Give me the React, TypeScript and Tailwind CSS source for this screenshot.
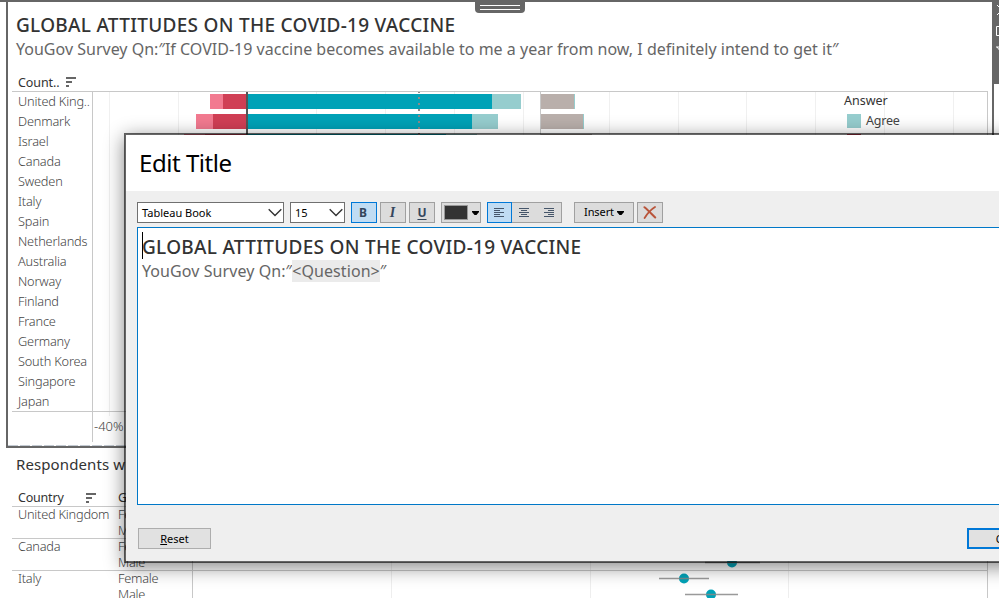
import React from "react";

const countries = [
  "United King..", "Denmark", "Israel", "Canada", "Sweden", "Italy", "Spain", "Netherlands",
  "Australia", "Norway", "Finland", "France", "Germany", "South Korea", "Singapore", "Japan",
];

const bars = [
  { y: 2, segs: [[118, 13, "#f27a90"], [131, 23, "#d03f55"], [155, 245, "#00a2b7"], [400, 29, "#96cdce"], [449, 33, "#b9afab"], [482, 1, "#96cdce"]] },
  { y: 22, segs: [[104, 17, "#f27a90"], [121, 33, "#d03f55"], [155, 225, "#00a2b7"], [380, 26, "#96cdce"], [449, 42, "#b9afab"], [491, 1, "#96cdce"]] },
  { y: 42, segs: [[92, 21, "#f27a90"], [113, 41, "#d03f55"], [155, 199, "#00a2b7"], [354, 31, "#96cdce"], [449, 51, "#b9afab"]] },
] as { y: number; segs: [number, number, string][] }[];

const grid = [17, 86, 224, 293, 362, 431, 517, 586, 654, 723, 792, 861];

const SortIcon = () => (
  <svg width="11" height="11" viewBox="0 0 11 11" className="shrink-0" fill="#666" shapeRendering="crispEdges">
    <path d="M0 0h10v2H0zM0 4h6v2H0zM0 8h3v2H0z" />
  </svg>
);

const Chevron = () => (
  <svg width="14" height="9" viewBox="0 0 14 9" fill="none" stroke="#333" strokeWidth="1.4" className="shrink-0">
    <path d="M.7 1.2 7 7.5l6.3-6.3" />
  </svg>
);

const Caret = () => (
  <svg width="7" height="4" viewBox="0 0 7 4" className="shrink-0"><path d="M0 0h7v1L4.5 4h-2L0 1z" fill="#000" /></svg>
);

const AlignIcon = ({ kind }: { kind: "left" | "center" | "right" }) => (
  <svg width="10" height="9" viewBox="0 0 10 9" className="shrink-0" fill="#46566a" shapeRendering="crispEdges">
    {[10, 6, 10, 6, 10].map((w, i) => (
      <rect key={i} x={kind === "left" ? 0 : kind === "center" ? (10 - w) / 2 : 10 - w} y={i * 2} width={w} height="1" />
    ))}
  </svg>
);

const btn = "flex h-[21px] shrink-0 items-center justify-center border border-[#a0a0a0] bg-[#dcdcdc]";
const btnOn = "flex h-[21px] shrink-0 items-center justify-center border border-[#0078d7] bg-[#c0dcf3]";

function DivergingChart() {
  return (
    <svg width="896" height="350" className="shrink-0" shapeRendering="crispEdges">
      {grid.map((x) => <rect key={x} x={x} y="0" width="1" height="324" fill="#f0f0f0" />)}
      <rect x="448" y="0" width="1" height="350" fill="#c8c8c8" />
      {bars.map((b) => b.segs.map(([x, w, c]) => <rect key={`${b.y}-${x}`} x={x} y={b.y} width={w} height="15" fill={c} />))}
      <rect x="154" y="0" width="2" height="320" fill="#555" />
      <path d="M327 -1V320" stroke="#8f8888" strokeWidth="2" strokeDasharray="2 4" />
      <rect x="895" y="0" width="1" height="350" fill="#c8c8c8" />
    </svg>
  );
}

function TopSheet() {
  return (
    <section className="relative ml-[6px] h-[448px] w-[988px] border-2 border-[#666] bg-white">
      <div className="flex flex-col pl-2 pt-[11px]">
        <h1 className="h-[24px] whitespace-nowrap text-[19px] font-medium leading-6 tracking-[0.29px] text-[#333]">GLOBAL ATTITUDES ON THE COVID-19 VACCINE</h1>
        <p className="h-[24px] whitespace-nowrap text-[16px] leading-6 tracking-[0.01px] text-[#666]">YouGov Survey Qn:″If COVID-19 vaccine becomes available to me a year from now, I definitely intend to get it″</p>
      </div>
      <div className="ml-1 mt-[10px] flex h-[21px] w-[976px] items-center border-b border-[#c8c8c8] pl-[6px] pt-[3px] text-[12.5px] tracking-[-0.1px] text-[#333]">
        <span className="w-[48px] pt-[2px]">Count..</span>
        <SortIcon />
      </div>
      <div className="ml-1 flex">
        <div className="w-[81px] border-r border-[#c8c8c8]">
          <ul className="h-[320px] border-b border-[#c8c8c8] pl-[6px] text-[12.75px] font-light leading-[18px] tracking-[-0.18px] text-[#444]">
            {countries.map((c) => <li key={c} className="h-5 whitespace-nowrap">{c}</li>)}
          </ul>
        </div>
        <div className="relative -ml-px">
          <DivergingChart />
          <div className="absolute left-[752px] top-0 text-[12.5px] leading-[18px] text-[#333]">
            <div className="h-5">Answer</div>
            <div className="flex h-5 items-start pl-[3px] text-[#444]"><i className="mr-[5px] mt-[2px] h-[14px] w-[14px] bg-[#96cdce]" /><span className="tracking-[-0.2px]">Agree</span></div>
            <div className="flex h-5 items-start pl-[3px]"><i className="mr-[5px] mt-[2px] h-[14px] w-[14px] bg-[#d03f55]" /></div>
          </div>
          <div className="absolute left-0 top-[319px] h-px w-[896px] bg-[#c8c8c8]" />
          <span className="absolute left-[2px] top-[324px] text-[13px] font-light leading-5 text-[#444]">-40%</span>
        </div>
      </div>
      <div className="absolute bottom-0 left-0 h-px w-full bg-[repeating-linear-gradient(90deg,#c3cad2_0_10px,#fff_10px_12px)]" />
      <div className="absolute -top-[2px] left-[467px] flex h-[13px] w-[50px] flex-col items-center gap-[3px] rounded-b-sm bg-[#666] pt-[5px]">
        <i className="h-px w-10 shrink-0 bg-white" />
        <i className="h-px w-10 shrink-0 bg-white" />
      </div>
    </section>
  );
}

const groups = [["United Kingdom", "Female", "Male"], ["Canada", "Female", "Male"], ["Italy", "Female", "Male"]];

function BottomSheet() {
  return (
    <section className="ml-3 flex w-[976px] flex-col">
      <h2 className="mt-[5px] h-[23px] whitespace-nowrap pl-1 text-[15px] leading-[22px] tracking-[0.1px] text-[#333]">Respondents w</h2>
      <div className="mt-[12px] flex h-[19px] items-center border-b border-[#c8c8c8] pl-[6px] pt-[2px] text-[12.5px] tracking-[-0.2px] text-[#333]">
        <span className="w-[68px]">Country</span>
        <SortIcon />
        <span className="ml-[21px]">G</span>
      </div>
      <div className="flex">
        <div className="w-[181px] border-r border-[#c8c8c8] text-[12.75px] font-light leading-4 tracking-[-0.22px] text-[#444]">
          {groups.map(([c, f, m]) => (
            <div key={c} className="flex h-8 border-b border-[#c8c8c8] pl-[6px]">
              <span className="-mt-px w-[100px] whitespace-nowrap">{c}</span>
              <span className="-mt-px">{f}<br />{m}</span>
            </div>
          ))}
        </div>
        <svg width="795" height="96" className="shrink-0">
          <g fill="#eee"><rect x="198" width="1" height="96" /><rect x="397" width="1" height="96" /><rect x="595" width="1" height="96" /></g>
          <g fill="#c8c8c8"><rect y="31" width="795" height="1" /><rect y="63" width="795" height="1" /><rect x="794" width="1" height="96" /></g>
          {[[539, 512, 567, 55.5], [491, 466, 516, 71.5], [518, 492, 545, 87.5]].map(([x, a, b, y]) => (
            <g key={x}>
              <circle cx={x} cy={y} r="5" fill="#00a2b7" />
              <path d={`M${a} ${y}H${b}`} stroke="#888" strokeOpacity=".85" strokeWidth="1.6" />
            </g>
          ))}
        </svg>
      </div>
    </section>
  );
}

function EditDialog() {
  return (
    <div className="absolute left-[124px] top-[133px] flex h-[430px] w-[920px] flex-col border-2 border-black/60 bg-[#efefef] bg-clip-padding shadow-[0_4px_18px_rgba(0,0,0,0.48)]">
      <header className="h-14 shrink-0 bg-white pl-[13px] text-[24px] leading-[56px] tracking-[-0.45px] text-black">Edit Title</header>
      <div className="ml-[11px] mt-[11px] flex h-[21px] shrink-0 items-center text-[11px] text-black">
        <div className="mr-[6px] flex h-[21px] w-[147px] items-center justify-between border border-[#707070] bg-white pl-[4px] pr-px"><span className="pt-px">Tableau Book</span><Chevron /></div>
        <div className="mr-[6px] flex h-[21px] w-[55px] items-center justify-between border border-[#707070] bg-white pl-[4px] pr-px"><span className="pt-px text-[11px]">15</span><Chevron /></div>
        <div className={`${btnOn} mr-[3px] w-[26px] pr-[2px] text-[12px] font-bold text-[#34465c]`}>B</div>
        <div className={`${btn} mr-[3px] w-[26px] pr-px font-['Liberation_Serif'] text-[14px] font-bold italic text-[#34465c]`}>I</div>
        <div className={`${btn} mr-[6px] w-[26px] text-[12px] font-bold text-[#34465c] underline underline-offset-2`}>U</div>
        <div className={`${btn} mr-[6px] w-[40px] gap-[4px]`}><i className="h-[15px] w-[24px] border border-[#999] bg-[#333]" /><Caret /></div>
        <div className={`${btnOn} w-[25px] pr-px`}><AlignIcon kind="left" /></div>
        <div className={`${btn} mr-3 w-[50px] gap-[15px] border-l-0`}><AlignIcon kind="center" /><AlignIcon kind="right" /></div>
        <div className={`${btn} mr-[3px] w-[60px] gap-[3px] tracking-[-0.1px]`}>Insert<Caret /></div>
        <div className={`${btn} w-[26px]`}>
          <svg width="14" height="13" viewBox="0 0 14 13" fill="none" stroke="#b9543a" strokeLinecap="round"><path d="M1.5 1.2C5 4 9 8.5 12.2 11.5" strokeWidth="2" /><path d="M12 1C8 3.5 4 8 1.6 12" strokeWidth="1.8" /></svg>
        </div>
      </div>
      <div className="ml-[11px] mt-1 h-[278px] shrink-0 border border-[#0078c8] bg-white pl-[4px] pt-[4px]">
        <div className="flex h-[27px] items-center whitespace-nowrap text-[19px] font-medium leading-[27px] tracking-[0.29px] text-[#333]">
          <i className="-mr-px h-[27px] w-px shrink-0 bg-black" /><span className="pt-[3px]">GLOBAL ATTITUDES ON THE COVID-19 VACCINE</span>
        </div>
        <div className="mt-px flex h-[22px] text-[16px] leading-[22px] tracking-[0.08px] text-[#666]">
          YouGov Survey Qn:″<span className="bg-[#ebebeb]">&lt;Question&gt;</span>″
        </div>
      </div>
      <footer className="ml-3 mt-[23px] flex h-[21px] w-[902px] shrink-0 justify-between text-[11px] text-black">
        <button className="w-[73px] border border-[#adadad] bg-[#e1e1e1] pt-px leading-4"><u>R</u>eset</button>
        <button className="w-[73px] border-2 border-[#0078d7] bg-[#e1e1e1] leading-4">OK</button>
      </footer>
    </div>
  );
}

export default function App() {
  return (
    <main className="relative h-[598px] w-[999px] overflow-hidden bg-white font-['Noto_Sans',sans-serif]">
      <TopSheet />
      <BottomSheet />
      <div className="absolute left-[992px] top-0 h-[84px] w-[7px] bg-[#666]">
        <svg width="7" height="84" fill="none" stroke="#fff"><path d="M5 5l5 5M5 15l5-5M4.500 26.500h8v9h-8zM4 47h6M5 47l4 5" /></svg>
      </div>
      <div className="absolute left-0 top-0 h-[2px] w-full bg-[#666]" />
      <EditDialog />
    </main>
  );
}
